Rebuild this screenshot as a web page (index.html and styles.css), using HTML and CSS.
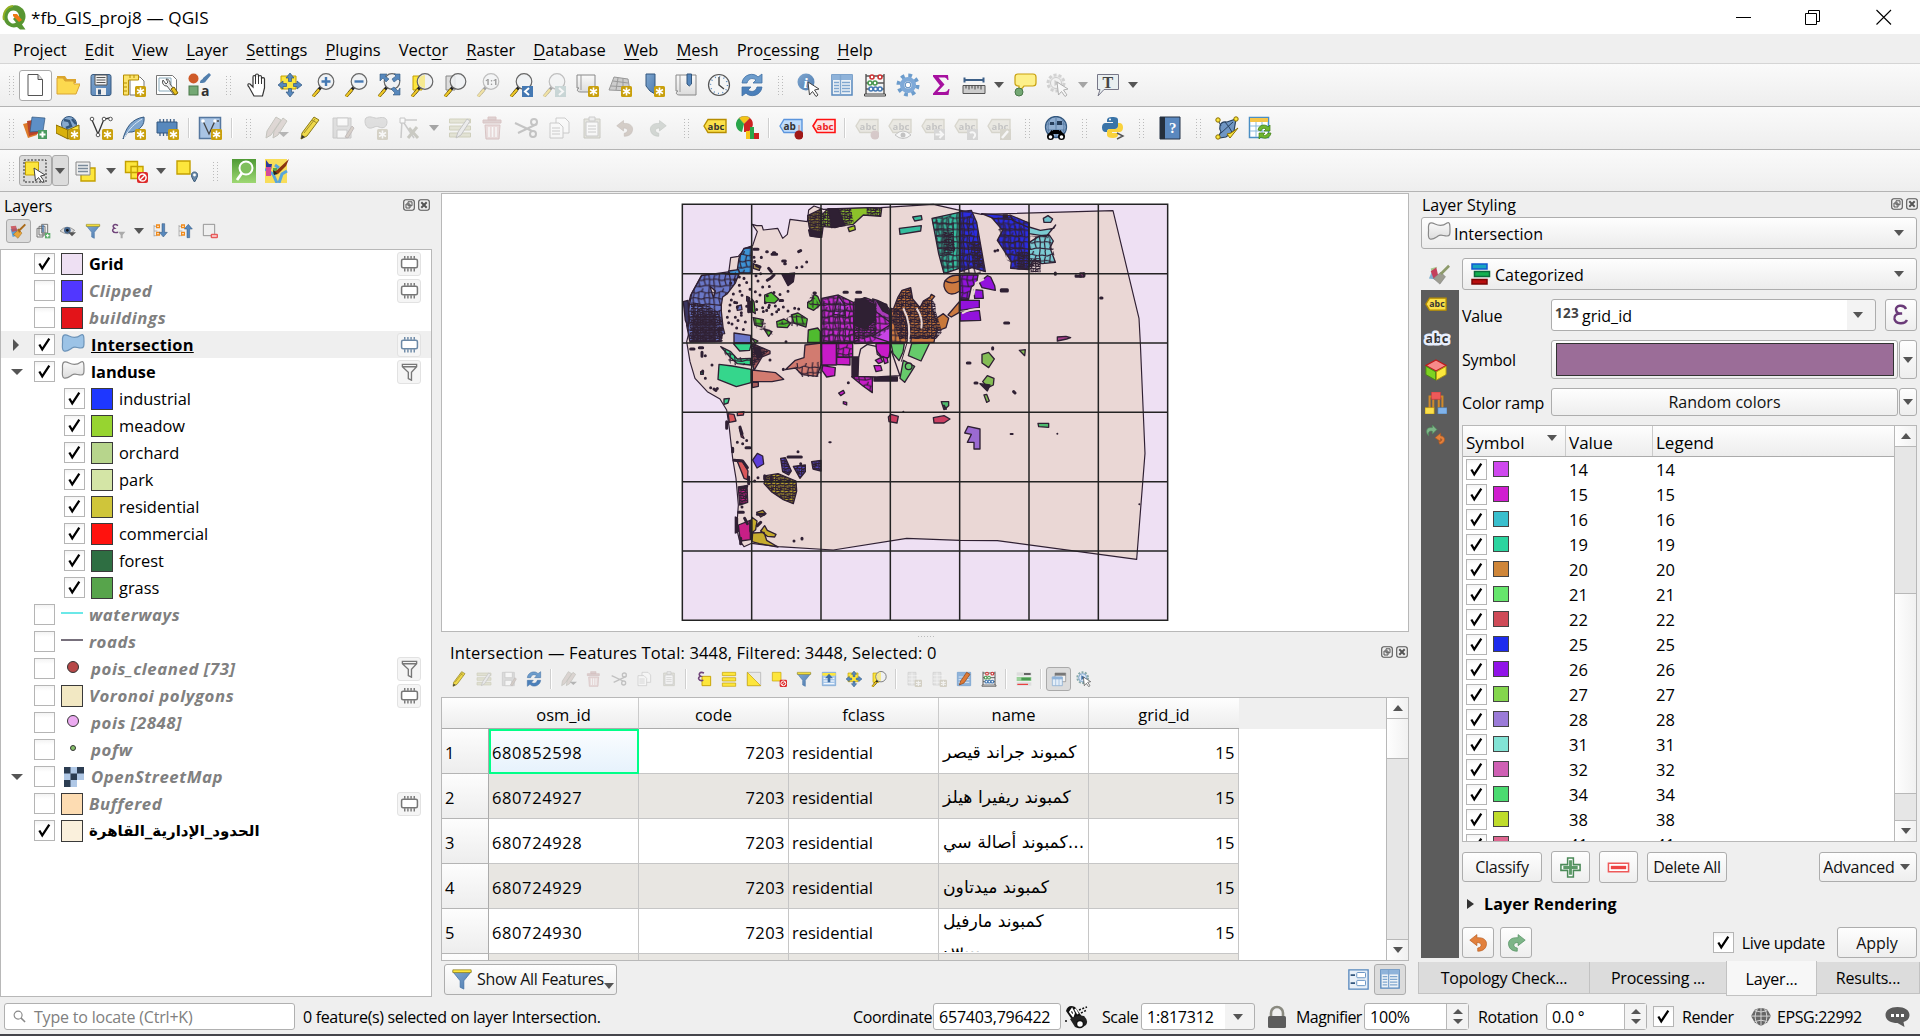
FILE: index.html
```html
<!DOCTYPE html>
<html lang="en">
<head>
<meta charset="utf-8">
<title>*fb_GIS_proj8 — QGIS</title>
<link rel="stylesheet" href="styles.css">
</head>
<body>
<svg class="paints" aria-hidden="true">
<defs>
<linearGradient id="steel" x1="0" y1="0" x2="1" y2="1"><stop offset="0" stop-color="#7fa6cf"/><stop offset="1" stop-color="#4f7db1"/></linearGradient>
<linearGradient id="pale" x1="0" y1="0" x2="0" y2="1"><stop offset="0" stop-color="#fafafa"/><stop offset="1" stop-color="#dcdcdc"/></linearGradient>
<linearGradient id="leaf" x1="0" y1="0" x2="0" y2="1"><stop offset="0" stop-color="#4f9a35"/><stop offset="1" stop-color="#9ed873"/></linearGradient>
<pattern id="dense" width="26" height="24" patternUnits="userSpaceOnUse"><path d="M0 5l9 2 8-4 9 2M0 14l7-1 10 3 9-2M0 21l12 1 14-1M5 0l1 7-2 7 2 10M12 3l-1 11 3 8M19 0l-2 8 3 7-1 9M24 5l-1 9 1 8" fill="none" stroke="#2f2033" stroke-width="3.4"/></pattern>
<pattern id="parcel" width="62" height="56" patternUnits="userSpaceOnUse"><path d="M0 12l16 3 14-6 18 5 14-2M0 30l14-2 18 5 16-5 14 2M0 48l30 3 16-4 16 1M9 0l2 14-4 15 3 27M25 11l-2 21 5 19M37 0l-3 9M44 13l-4 17 5 17M56 0l-2 13 3 16-1 27" fill="none" stroke="#2f2033" stroke-width="3.6"/></pattern>
</defs>
</svg>
<svg class="icons" aria-hidden="true">
<symbol id="star" viewBox="0 0 24 24"><rect x="13" y="13" width="11" height="11" rx="1.500" fill="#c9a00d"/><path d="M18.500 14.500v8M15 16.500l7 4M22 16.500l-7 4" stroke="#fff" stroke-width="1.600"/></symbol>
<symbol id="new" viewBox="0 0 24 24"><path d="M5 1.500h10l4.500 5v16H5z" fill="#fff" stroke="#555"/><path d="M15 1.500v5h4.500" fill="#ddd" stroke="#555"/></symbol>
<symbol id="open" viewBox="0 0 24 24"><path d="M1 3h8l2 3h9v4H1z" fill="#dba52e"/><path d="M1 21V5h6l2 3h9v3h6l-4 10z" fill="#fcd94f" stroke="#d9a432"/></symbol>
<symbol id="save" viewBox="0 0 24 24"><rect x="2" y="1.500" width="20" height="21" rx="2" fill="url(#steel)" stroke="#3a5b80"/><path d="M6 2h12v10H6z" fill="#f3f3f3" stroke="#555"/><path d="M7.500 4.500h9M7.500 7h9M7.500 9.500h9" stroke="#555"/><path d="M7 15h10v7H7z" fill="#eee"/><path d="M9 16.500h3v5H9z" fill="#3a5b80"/></symbol>
<symbol id="layout" viewBox="0 0 24 24"><path d="M8 4h10l4 4v14H8z" fill="#fff" stroke="#777"/><path d="M1.500 2h15v5h-10v15h-5z" fill="#fbe36a" stroke="#b68d00"/><path d="M2 10h3M2 14h3M2 18h3M8 2v3M12 2v3" stroke="#b68d00"/><use href="#star"/></symbol>
<symbol id="layoutmgr" viewBox="0 0 24 24"><path d="M1.500 2.500h16l4 4v15h-20z" fill="#fff" stroke="#777"/><path d="M4 5h12v13H4z" fill="#fff" stroke="#8ab"/><path d="M8 7a4 4 0 0 0 4 6l7 9 3-2-7-9a4 4 0 0 0-4-5l2 3-2 2z" fill="#eee" stroke="#555"/><path d="M16 16l4 6 3-2-4-6z" fill="#e8c11e" stroke="#7a6000"/></symbol>
<symbol id="style" viewBox="0 0 24 24"><circle cx="5.500" cy="5.500" r="5" fill="#cf5a28"/><path d="M12 10c0-4 3-3 3-5l6-5 2 2-5 6c-1 2-3 2-6 2z" fill="#527fad"/><rect x="1" y="13" width="9" height="9" fill="#74a874" stroke="#4a784a"/><text x="13" y="22.500" font-size="14" fill="#333" font-family="Open Sans">a</text></symbol>
<symbol id="hand" viewBox="0 0 24 24"><path d="M9 23L4 14c-2-2-1-4 1-3l3 3V4c0-2 2.500-2 2.500 0V2.500c0-2 3-2 3 0V4c0-2 3-2 3 0v2c0-2 3-1.500 3 0v9l-2 8z" fill="#fff" stroke="#333" stroke-width="1.200"/><path d="M10.500 4v7M13.500 4v7M16.500 5v6" stroke="#333"/></symbol>
<symbol id="arrows" viewBox="0 0 24 24"><path d="M12 0l4 5h-2.500v3.500h-3V5H8zM12 24l4-5h-2.500v-3.500h-3V19H8zM0 12l5-4v2.500h3.500v3H5V16zM24 12l-5-4v2.500h-3.500v3H19V16z" fill="#5788bd" stroke="#33577e" stroke-width=".7"/></symbol>
<symbol id="pansel" viewBox="0 0 24 24"><path d="M3 3h15v13H3z" fill="#fde63c" stroke="#c4a000"/><use href="#arrows"/></symbol>
<symbol id="lens" viewBox="0 0 24 24"><path d="M10 14L5 20" stroke="#222" stroke-width="3"/><path d="M8 16.500l-6 7" stroke="#6a5500" stroke-width="3.200"/><path d="M8 16.500l-6 7" stroke="#f0c929" stroke-width="2"/><circle cx="15" cy="8.500" r="7.800" fill="#eef1f3" fill-opacity=".85" stroke="#666" stroke-width="1.200"/></symbol>
<symbol id="zin" viewBox="0 0 24 24"><use href="#lens"/><path d="M15 4v9M10.500 8.500h9" stroke="#4579b3" stroke-width="2.400"/></symbol>
<symbol id="zout" viewBox="0 0 24 24"><use href="#lens"/><path d="M10.500 8.500h9" stroke="#4579b3" stroke-width="2.400"/></symbol>
<symbol id="zfull" viewBox="0 0 24 24"><use href="#lens"/><path d="M3 1h7L8 3l4 3-3 3-3-4-3 3zM23 1v7l-2-2-4 3-2-3 4-3-2-2zM23 22h-7l2-2-4-4 3-2 4 4 2-3z" fill="#5788bd" stroke="#33577e" stroke-width=".6"/></symbol>
<symbol id="zsel" viewBox="0 0 24 24"><path d="M3 3h9v14H3z" fill="#fde63c" stroke="#c4a000"/><use href="#lens"/><path d="M15 2v13a6.500 6.500 0 0 1 0-13" fill="#f6ea90"/></symbol>
<symbol id="zlay" viewBox="0 0 24 24"><path d="M3 3h9v14H3z" fill="#ddd" stroke="#888"/><use href="#lens"/></symbol>
<symbol id="z11" viewBox="0 0 24 24"><use href="#lens"/><text x="9" y="12" font-size="9" font-weight="700" font-family="Open Sans">1:1</text></symbol>
<symbol id="zlast" viewBox="0 0 24 24"><use href="#lens"/><path d="M13 13h11v11H13z" fill="#4579b3"/><path d="M20 15l-4 3.500 4 3.500" fill="none" stroke="#fff" stroke-width="2"/></symbol>
<symbol id="znext" viewBox="0 0 24 24"><use href="#lens"/><path d="M13 13h11v11H13z" fill="#8aa"/><path d="M17 15l4 3.500-4 3.500" fill="none" stroke="#fff" stroke-width="2"/></symbol>
<symbol id="newmap" viewBox="0 0 24 24"><path d="M2 2h18v17H6c-5 0-4-3-2-4H2z" fill="url(#pale)" stroke="#888"/><path d="M6 2v15" stroke="#999"/><use href="#star"/></symbol>
<symbol id="new3d" viewBox="0 0 24 24"><path d="M6 4l14 2 2 12-21-1z" fill="#ccc" stroke="#999"/><path d="M10 5L8 17M15 5v13M5 8l15 2M3 13l18 1" stroke="#999"/><use href="#star"/></symbol>
<symbol id="bookmark" viewBox="0 0 24 24"><path d="M5 1h9v20l-5-3-4-5z" fill="url(#steel)" stroke="#33577e"/><use href="#star"/></symbol>
<symbol id="showbm" viewBox="0 0 24 24"><path d="M2 2h20v20H6c-5 0-4-3-2-4H2z" fill="url(#pale)" stroke="#888"/><path d="M6 2v17" stroke="#999"/><path d="M13 1h4.500v10l-2.200 2-2.300-2z" fill="#5788bd" stroke="#33577e"/></symbol>
<symbol id="clock" viewBox="0 0 24 24"><circle cx="12" cy="12" r="10.500" fill="#f5f6f6" stroke="#555" stroke-width="1.200"/><circle cx="12" cy="12" r="8.500" fill="none" stroke="#5788bd" stroke-width="1.500" stroke-dasharray="1 3.450"/><path d="M12 4v8l5 4" fill="none" stroke="#444" stroke-width="1.400"/></symbol>
<symbol id="refresh" viewBox="0 0 24 24"><path d="M2 10C3 1 14-1 18 4l4-3v9h-9l3-3c-4-3-8-1-9 3z" fill="#6c9ccc" stroke="#3f6ea3" stroke-width=".8"/><path d="M22 14c-1 9-12 11-16 6l-4 3v-9h9l-3 3c4 3 8 1 9-3z" fill="#4b80bb" stroke="#3f6ea3" stroke-width=".8"/></symbol>
<symbol id="cursor" viewBox="0 0 24 24"><path d="M11 9l11 7-4.500 1 3.500 5-2 1.500-3.500-5-3 3.500z" fill="#fff" stroke="#444"/></symbol>
<symbol id="info" viewBox="0 0 24 24"><circle cx="9" cy="9" r="8.500" fill="url(#steel)"/><text x="6.500" y="14.500" font-size="15" font-style="italic" font-weight="700" fill="#fff" font-family="Liberation Serif">i</text><use href="#cursor"/></symbol>
<symbol id="table" viewBox="0 0 24 24"><path d="M2 2h20v20H2z" fill="#edf2f7" stroke="#5788bd" stroke-width="1.500"/><path d="M2 2h20v5H2z" fill="#8fb3da"/><path d="M4 9.500h5M4 12.500h5M4 15.500h5M4 18.500h5M12 9.500h8M12 12.500h8M12 15.500h8M12 18.500h8M10.500 2v20" stroke="#7fa6cf" stroke-width="1.400"/></symbol>
<symbol id="abacus" viewBox="0 0 24 24"><path d="M3 1v21M21 1v21M3 3h18M3 10h18M3 16h18" stroke="#555" stroke-width="1.400"/><path d="M1.500 21h21v2h-21z" fill="#eee" stroke="#444"/><g fill="#fff" stroke-width="1.600"><g stroke="#c33"><circle cx="9" cy="4" r="2"/><circle cx="17" cy="4" r="2"/></g><g stroke="#4a9a50"><circle cx="7" cy="10" r="2"/><circle cx="12" cy="10" r="2"/></g><g stroke="#4579b3"><circle cx="8" cy="16" r="2"/><circle cx="12.500" cy="16" r="2"/><circle cx="17" cy="16" r="2"/></g></g></symbol>
<symbol id="gear" viewBox="0 0 24 24"><circle cx="12" cy="12" r="9.500" fill="none" stroke="#6c9ccc" stroke-width="4" stroke-dasharray="3.700 3.760"/><circle cx="12" cy="12" r="5.800" fill="none" stroke="#7ea9d8" stroke-width="4.500"/><circle cx="12" cy="12" r="2.800" fill="#fff" stroke="#5788bd"/></symbol>
<symbol id="sigma" viewBox="0 0 24 24"><path d="M4 2h15l.5 5h-1c-1-2-2-2.500-4-2.500H9.500l6 7-7 7.500h7c2 0 3-1 4-3h1l-1 6H4v-1.500l7-8L4 3.500z" fill="#a6109f"/></symbol>
<symbol id="measure" viewBox="0 0 24 24"><path d="M2 7h20M2.500 4.500v5M21.500 4.500v5" stroke="#3c5f87" stroke-width="2"/><path d="M1 12.500h22v8H1z" fill="#ccc" stroke="#555"/><path d="M4 12.500v3M7 12.500v4M10 12.500v3M13 12.500v4M16 12.500v3M19 12.500v4" stroke="#444"/></symbol>
<symbol id="tip" viewBox="0 0 24 24"><path d="M5 1h15q3 0 3 3v6q0 3-3 3h-9l-5 6V13q-4 0-4-3V4q0-3 3-3z" fill="#fdf08a" stroke="#c9a00d" stroke-width="1.200"/><circle cx="6" cy="19" r="4" fill="#74a874" stroke="#4a784a"/></symbol>
<symbol id="action" viewBox="0 0 24 24"><circle cx="10" cy="10" r="8" fill="#ddd" stroke="#999" stroke-width="3" stroke-dasharray="3 2"/><circle cx="10" cy="10" r="5.500" fill="#eee" stroke="#888"/><path d="M8.500 7l5 3-5 3z" fill="#888"/><use href="#cursor"/></symbol>
<symbol id="annot" viewBox="0 0 24 24"><path d="M1.500 1.500h21v15H8l-6 6.500 2-6.500H1.500z" fill="#e9eff1" stroke="#778"/><text x="6.500" y="14.500" font-size="16" font-family="Liberation Serif" font-weight="700" fill="#444">T</text></symbol>
<symbol id="dsm" viewBox="0 0 24 24"><path d="M0 8l12-3 2 14-9 3z" fill="#dd7b2a"/><path d="M4 5l12-2 1 14-11 3z" fill="#b8442a"/><path d="M9 1l13 1-2 13-13 1z" fill="#5d8fc6" stroke="#33577e" stroke-width=".7"/><path d="M15 14h9v9h-9z" fill="#4a9a60"/><path d="M19.500 15.500v6M16.500 18.500h6" stroke="#fff" stroke-width="2"/></symbol>
<symbol id="geopkg" viewBox="0 0 24 24"><circle cx="13" cy="8" r="7.500" fill="#86a9cf" stroke="#33577e"/><path d="M8 4l5 1 2 5-5 2M16 3l4 5" stroke="#33577e" stroke-width="2.500" fill="none"/><path d="M0 9l12 5v9L0 17z" fill="#d9b10c" stroke="#8a6d00"/><path d="M12 14l11-5v9l-11 5z" fill="#fae63f" stroke="#8a6d00"/><use href="#star"/></symbol>
<symbol id="shape" viewBox="0 0 24 24"><path d="M3 4l6 14L15 3l6-1" fill="none" stroke="#333" stroke-width="1.300"/><g fill="#fff" stroke="#555"><circle cx="3" cy="3" r="1.800"/><circle cx="15" cy="3" r="1.800"/><circle cx="21.500" cy="3" r="1.800"/><circle cx="9" cy="19" r="1.800"/></g><use href="#star"/></symbol>
<symbol id="feather" viewBox="0 0 24 24"><path d="M1 23C4 12 9 3 22 1c1 8-4 13-12 15-3 0-5 0-6 3z" fill="#7fa6cf" stroke="#33577e"/><path d="M2 22C8 12 12 8 20 3" stroke="#dce8f5" fill="none"/><use href="#star"/></symbol>
<symbol id="chip" viewBox="0 0 24 24"><path d="M5 3v17M8.500 3v17M12 3v17M15.500 3v17M19 3v17" stroke="#3c5f87" stroke-width="1.300"/><path d="M2 6h20v11H2z" fill="#5788bd" stroke="#33577e"/><use href="#star"/></symbol>
<symbol id="virt" viewBox="0 0 24 24"><path d="M1.500 1.500h21v21h-21z" fill="#a9c4e4" stroke="#55779f" stroke-width="1.500"/><path d="M5 5l6 13 6-13h4" fill="none" stroke="#444" stroke-width="1.300"/><circle cx="5" cy="5" r="1.800" fill="#fff"/><circle cx="17" cy="5" r="1.800" fill="#fff"/><use href="#star"/></symbol>
<symbol id="pencil" viewBox="0 0 24 24"><path d="M3 23l1-6L16 1l5 3L9 20z" fill="#efd94a" stroke="#8a7a1a"/><path d="M14 4l5 3M6 17L17 3" stroke="#a4902a"/><path d="M3 23l1-4 3 2z" fill="#333"/></symbol>
<symbol id="pencils" viewBox="0 0 24 24"><path d="M1 22l1-7L11 1l5 3-10 15zM8 22l1-7L18 2l4 3-9 14z" fill="#b9a7a0" stroke="#776"/><path d="M13 16h11l-5.500 5z" fill="#555"/></symbol>
<symbol id="saveedit" viewBox="0 0 24 24"><path d="M2 2h18v20H2z" fill="#bbb" stroke="#888"/><path d="M6 2h11v8H6zM6 14h10v8H6z" fill="#fff" stroke="#888"/><path d="M14 21L21 10l2 2-6 10z" fill="#a98" stroke="#766"/></symbol>
<symbol id="blob" viewBox="0 0 24 24"><path d="M2 2c5-3 8 1 12 0s9-1 9 4-4 7-8 5-6 2-10 1-5-8-3-10z" fill="#bbb" stroke="#888"/><use href="#star"/></symbol>
<symbol id="vertex" viewBox="0 0 24 24"><path d="M4 22L5 4h15M5 4l12 18" fill="none" stroke="#888" stroke-width="1.500"/><path d="M3 2h5v5H3z" fill="#fff" stroke="#777"/><path d="M11 22l9-11M12 12l9 10" stroke="#887" stroke-width="3"/></symbol>
<symbol id="multi" viewBox="0 0 24 24"><path d="M1.500 3h21v4h-21zM1.500 10h21v4h-21zM1.500 17h21v4h-21z" fill="#c9c9a5" stroke="#996"/><path d="M8 22l2-6 9-13 3 2-9 14z" fill="#ddd" stroke="#777"/></symbol>
<symbol id="trash" viewBox="0 0 24 24"><path d="M2 4h18v3H2zM7 1h8v3H7z" fill="#b99" stroke="#a77"/><path d="M4 9h15l-1 14H5z" fill="#d9b5b5" stroke="#a77"/><path d="M8 11v10M11.500 11v10M15 11v10" stroke="#fff" stroke-width="1.500"/></symbol>
<symbol id="cut" viewBox="0 0 24 24"><path d="M1 7l17 8M4 17L23 8" stroke="#777" stroke-width="2"/><circle cx="20" cy="6" r="3" fill="none" stroke="#777" stroke-width="2"/><circle cx="19" cy="18" r="3" fill="none" stroke="#777" stroke-width="2"/></symbol>
<symbol id="copy" viewBox="0 0 24 24"><path d="M9 2h9l4 4v11H9z" fill="#fff" stroke="#888"/><path d="M3 7h9l4 4v11H3z" fill="#fff" stroke="#888"/><path d="M5 12h8M5 15h8M5 18h8" stroke="#888"/></symbol>
<symbol id="paste" viewBox="0 0 24 24"><path d="M4 3h16v19H4z" fill="#ccb" stroke="#887"/><path d="M6 6h12v14H6z" fill="#fff" stroke="#888"/><path d="M9 1h6v4H9zM8 10h8M8 13h8M8 16h8" fill="#ddd" stroke="#888"/></symbol>
<symbol id="undo" viewBox="0 0 24 24"><path d="M1 9l9-7v4c9-1 13 4 12 9-1 6-6 8-11 8v-4c6-1 6-7-1-7v4z" fill="#e2803c" stroke="#b4581c" stroke-width=".8"/></symbol>
<symbol id="redo" viewBox="0 0 24 24"><path d="M23 9l-9-7v4C5 5 1 10 2 15c1 6 6 8 11 8v-4c-6-1-6-7 1-7v4z" fill="#7db588" stroke="#4b8a58" stroke-width=".8"/></symbol>
<symbol id="tag" viewBox="0 0 24 24"><path d="M1 10l4-6.500h18v13H5z" fill="#fbe04a" stroke="#b68d00" stroke-width="1.400"/><text x="4.500" y="13.500" font-size="9.500" font-weight="700" fill="#333" font-family="Open Sans" textLength="17">abc</text></symbol>
<symbol id="diag" viewBox="0 0 24 24"><path d="M8 8L3 2q6-4 11 0z" fill="#f5c518" stroke="#874" stroke-width=".5"/><path d="M8 8L3 2a8 8 0 0 0 3 14z" fill="#2aa54a"/><path d="M8 8l6-6a8 8 0 0 1-6 14z" fill="#c22"/><path d="M10 15h4v8h-4z" fill="#f5c518"/><path d="M14 11h4v12h-4z" fill="#2aa54a"/><path d="M18 17h5v6h-5z" fill="#c22"/></symbol>
<symbol id="tagpin" viewBox="0 0 24 24"><path d="M1 10l4-6.500h18v13H5z" fill="#bfdcfb" stroke="#5b95dd" stroke-width="1.400"/><text x="4.500" y="13.500" font-size="10" font-weight="700" fill="#333" font-family="Open Sans">ab</text><path d="M20 9v8" stroke="#caa" stroke-width="2"/><circle cx="20" cy="19" r="4.500" fill="#a01818"/></symbol>
<symbol id="tagred" viewBox="0 0 24 24"><path d="M1 10l4-6.500h18v13H5z" fill="#fbe4e4" stroke="#f11" stroke-width="1.600"/><text x="4.500" y="13.500" font-size="9.500" font-weight="700" fill="#e22" font-family="Open Sans" textLength="17">abc</text></symbol>
<symbol id="tagoff" viewBox="0 0 24 24"><path d="M1 10l4-6.500h18v13H5z" fill="#d8d4c4" stroke="#a9a58e" stroke-width="1.400"/><text x="4.500" y="13.500" font-size="9.500" font-weight="700" fill="#777" font-family="Open Sans" textLength="17">abc</text></symbol>
<symbol id="t1" viewBox="0 0 24 24"><use href="#tagoff"/><circle cx="20" cy="19" r="4.500" fill="#a88"/></symbol>
<symbol id="t2" viewBox="0 0 24 24"><use href="#tagoff"/><path d="M7 19q8-8 16 0-8 7-16 0z" fill="#fff" stroke="#777"/><circle cx="15" cy="19" r="2.500" fill="#777"/></symbol>
<symbol id="t3" viewBox="0 0 24 24"><use href="#tagoff"/><path d="M13 13h11v11H13z" fill="#aaa"/><path d="M14.500 18.500h7M18.500 15l3.500 3.500-3.500 3.500" fill="none" stroke="#fff" stroke-width="2"/></symbol>
<symbol id="t4" viewBox="0 0 24 24"><use href="#tagoff"/><path d="M13 13h11v11H13z" fill="#aaa"/><path d="M16 17a3 3 0 1 1 3 5" fill="none" stroke="#fff" stroke-width="2"/></symbol>
<symbol id="t5" viewBox="0 0 24 24"><use href="#tagoff"/><path d="M13 13h11v11H13z" fill="#a9a58e"/><path d="M15 22l6-7" stroke="#fff" stroke-width="2.500"/></symbol>
<symbol id="meta" viewBox="0 0 24 24"><circle cx="12" cy="11" r="10.500" fill="#8fadd0" stroke="#33577e" stroke-width="1.300"/><path d="M2 8h20M2 14h20M12 1v20M6 3q-4 8 0 16M18 3q4 8 0 16" stroke="#5d80a8" fill="none"/><path d="M6 6h4v3H6zM13 5h5v4h-5z" fill="#263d5a"/><path d="M9 15l-4 5M15 15l4 5" stroke="#000" stroke-width="3.500"/><circle cx="6.500" cy="20.500" r="3.500"/><circle cx="17.500" cy="20.500" r="3.500"/><path d="M9 14h6v4H9z"/><circle cx="6.500" cy="21" r="1.800" fill="#fff"/><circle cx="17.500" cy="21" r="1.800" fill="#fff"/></symbol>
<symbol id="python" viewBox="0 0 24 24"><path d="M11 1c5 0 6 1 6 3v6c0 2-1 3-3 3H9c-2 0-3 1-3 3H4c-4 0-4-9 0-9h8V6H6V4c0-2 2-3 5-3z" fill="#3a74a8"/><path d="M12 22c-4 0-6-1-6-3v-3c0-2 1-3 3-3h5c2 0 3-1 3-3V7h2c4 0 4 9 0 9h-8v1h6v2c0 2-2 3-5 3z" fill="#f9d23c"/><circle cx="9" cy="3.500" r="1" fill="#fff"/><path d="M16 17l6 3-6 3" fill="none" stroke="#555" stroke-width="1.400"/></symbol>
<symbol id="help" viewBox="0 0 24 24"><path d="M2 1h20v22H2z" fill="#5a88bf" stroke="#263548"/><path d="M2 1h5v22H2z" fill="#25303e"/><text x="11" y="17" font-size="15" fill="#fff" font-family="Liberation Serif">?</text></symbol>
<symbol id="topo" viewBox="0 0 24 24"><path d="M5 10q1-5 7-4l9-3-2 12-8 6-7 1q0-4 2-6-2-3-1-6z" fill="#6f96c4" stroke="#28415f" stroke-width="1.200"/><path d="M3 4l3 6M6 17l12-11M10 6l4 5 4 7" stroke="#28415f" fill="none"/><g fill="#fae63f" stroke="#8a6d00"><circle cx="3" cy="4" r="2.200"/><circle cx="21" cy="3" r="2.200"/><circle cx="3" cy="21" r="2.200"/><path d="M12 18l3 4 8-10-7 5z"/></g></symbol>
<symbol id="tabref" viewBox="0 0 24 24"><path d="M1.500 1.500h19v20h-19z" fill="#fff" stroke="#4a8ec4" stroke-width="1.500"/><path d="M2 2h18v4H2z" fill="#f6c54a"/><path d="M2 10h18M2 15h18M8 6v15M14 6v15" stroke="#8ab9dd"/><path d="M10 14c1-6 8-6 10-3l2-2v6h-6l2-2c-2-1-4-1-5 2zM23 17c-1 6-8 6-10 4l-2 2v-6h6l-2 2c2 1 4 0 5-2z" fill="#6eb52f" stroke="#3e7e12" stroke-width=".7"/></symbol>
<symbol id="select" viewBox="0 0 24 24"><path d="M1 1h22v22H1z" fill="none" stroke="#222" stroke-dasharray="2 1.500"/><path d="M2.500 3h13v13h-13z" fill="#fde63c" stroke="#c4a000"/><use href="#cursor"/></symbol>
<symbol id="sellist" viewBox="0 0 24 24"><path d="M7 9h14v13H7z" fill="#fde63c" stroke="#c4a000" stroke-width="1.400"/><path d="M2 3h14v13H2z" fill="#eee" stroke="#888"/><path d="M4 6.500h10M4 9.500h10M4 12.500h10" stroke="#7a8a9a" stroke-width="1.600"/></symbol>
<symbol id="no" viewBox="0 0 24 24"><rect x="13" y="13" width="11" height="11" rx="2" fill="#dd2a2a"/><circle cx="18.500" cy="18.500" r="3.600" fill="none" stroke="#fff" stroke-width="1.500"/><path d="M16 21l5-5" stroke="#fff" stroke-width="1.400"/></symbol>
<symbol id="desel" viewBox="0 0 24 24"><path d="M1.500 2.500h12v11h-12zM7 7.500h12v12H7z" fill="#fde63c" stroke="#c4a000" stroke-width="1.400"/><use href="#no"/></symbol>
<symbol id="selloc" viewBox="0 0 24 24"><path d="M2 2h13v13H2z" fill="#fde63c" stroke="#c4a000" stroke-width="1.400"/><path d="M19.500 23c-5-7-3-10 0-10s5 3 0 10z" fill="#6a89a8" stroke="#3a5a78"/><circle cx="19.500" cy="16" r="1.400" fill="#fff"/></symbol>
<symbol id="gsearch" viewBox="0 0 24 24"><path d="M0 0h24v24H0z" fill="url(#leaf)"/><circle cx="14" cy="9" r="6.500" fill="#7fbf5c" stroke="#fff" stroke-width="2"/><path d="M10 14l-5 7" stroke="#fff" stroke-width="2.800"/></symbol>
<symbol id="osm" viewBox="0 0 24 24"><path d="M0 0h22v24H0z" fill="#f8dd5a"/><path d="M0 10l8 5 4 9M14 24l3-9 5-3M10 6l4 3" stroke="#58a5dc" stroke-width="3" fill="none"/><path d="M1 1l3 4h3l-1 6H1z" fill="#2b3a9c"/><path d="M1 8h5v9H1z" fill="#d54a9a"/><path d="M8 9h4v6H8z" fill="#5aa84a"/><path d="M24 0l-3 7-8 8-5-3 3 0z" fill="#8a3410"/><path d="M8 11l5 4-4 1z" fill="#222"/></symbol>
<symbol id="funnel" viewBox="0 0 24 24"><path d="M2 4h20l-8 10v9l-4-2v-7z" fill="url(#steel)" stroke="#3f6ea3" stroke-width=".8"/><path d="M2 2h20v3H2z" fill="#fde63c" stroke="#8a7a1a" stroke-width=".8"/></symbol>
<symbol id="gfunnel" viewBox="0 0 24 24"><path d="M3 3h18v3l-6.500 7v10l-4-2v-8L3 6zM3 6h18" fill="#f4f4f4" stroke="#777" stroke-width="1.700"/></symbol>
<symbol id="mem" viewBox="0 0 24 24"><path d="M6 2.500v3.500M10 2.500v3.500M14 2.500v3.500M18 2.500v3.500M6 18v4M10 18v4M14 18v4M18 18v4" stroke="currentColor" stroke-width="1.800"/><rect x="2" y="6.500" width="20" height="11" rx="2" fill="#fff" stroke="currentColor" stroke-width="1.900"/></symbol>
<symbol id="poly" viewBox="0 0 24 24"><path d="M1.500 8C1 1 4 1 8 3s8 2 12-1c3-2 3 3 3 7s0 6-3 6c-4 0-6-2-9 0s-5 4-8 3-1-8-1.500-10z"/></symbol>
<symbol id="brush" viewBox="0 0 24 24"><path d="M1 9l9-1 3 10-9 3z" fill="#58a0d8"/><path d="M1 5l8-1 2 8-8 1z" fill="#c8424a" opacity=".8"/><path d="M5 17l8-7 5 5-6 8z" fill="#e7a43a" stroke="#8a5a10" stroke-width=".6"/><path d="M12 9l3 5M13 12L23 2" stroke="#a96a1a" stroke-width="3"/></symbol>
<symbol id="greybrush" viewBox="0 0 24 24"><path d="M3 6l7-2-5 10z" fill="#a9c78c"/><path d="M4 10l5 8-8-1z" fill="#7fb0d0"/><path d="M3 9l6-4 2 8-5 4z" fill="#c4405c"/><path d="M6 17l8-7 5 5-6 8z" fill="#9c9c90" stroke="#777" stroke-width=".6"/><path d="M14 12L23 3" stroke="#8d9a6a" stroke-width="3"/></symbol>
<symbol id="halo" viewBox="0 0 28 18"><text x="2.500" y="13.500" font-size="13" font-weight="700" fill="#333" stroke="#e8eefc" stroke-width="5" stroke-linejoin="round" paint-order="stroke" font-family="Open Sans" textLength="23">abc</text></symbol>
<symbol id="group" viewBox="0 0 24 24"><path d="M6 5h9v13H6zM3 8h9v13H3zM10 2h9v13h-9z" fill="none" stroke="#666" stroke-width="1.300"/><path d="M12 3v11" stroke="#4579b3" stroke-width="2"/><path d="M15 15h8v8h-8z" fill="#5fae6c"/><path d="M19 16.500v5M16.500 19h5" stroke="#fff" stroke-width="1.500"/></symbol>
<symbol id="eye" viewBox="0 0 24 24"><path d="M0 12Q10 1 22 11q-9 10-22 1z" fill="#ddd" stroke="#777"/><circle cx="11" cy="11" r="5" fill="#47688f"/><circle cx="11" cy="11" r="2" fill="#111"/><path d="M12 14h12l-6 6z" fill="#555"/></symbol>
<symbol id="eps" viewBox="0 0 24 24"><path d="M17 6C15 1 6 2 7 7c.5 3 3 4 6 3.500C7 10 5 13 5.500 16c1 5 10 6 12.500 1" fill="none" stroke="#6a3a78" stroke-width="2.400"/></symbol>
<symbol id="epsf" viewBox="0 0 24 24"><path d="M12 4C6 0 2 5 7 8c-5 1-4 8 5 6" fill="none" stroke="#70447a" stroke-width="2.200"/><path d="M12 13h11l-4 5v5h-3v-5z" fill="#aaa"/></symbol>
<symbol id="expand" viewBox="0 0 24 24"><path d="M3 3v17M3 5h5M3 12h5M3 19h5" stroke="#999"/><path d="M7 3h4v4H7zM7 14h4v4H7z" fill="#fff" stroke="#f18a1a" stroke-width="2"/><path d="M15 1h4v13h4l-6 7-6-7h4z" fill="#5788bd" stroke="#33577e" stroke-width=".8"/></symbol>
<symbol id="collapse" viewBox="0 0 24 24"><path d="M3 3v17M3 5h5M3 12h5M3 19h5" stroke="#999"/><path d="M7 3h4v4H7zM7 14h4v4H7z" fill="#fff" stroke="#f18a1a" stroke-width="2"/><path d="M15 22h4V9h4l-6-7-6 7h4z" fill="#5788bd" stroke="#33577e" stroke-width=".8"/></symbol>
<symbol id="remove" viewBox="0 0 24 24"><path d="M2 2h17v17H2z" fill="none" stroke="#888" stroke-width="1.300"/><rect x="13" y="16" width="11" height="7" rx="2" fill="#e85a5a"/><path d="M15 19.500h7" stroke="#fff" stroke-width="1.800"/></symbol>
<symbol id="esel" viewBox="0 0 24 24"><path d="M9 8h13v14H9z" fill="#fde63c" stroke="#c4a000" stroke-width="1.400"/><path d="M12 3C5 0 3 6 7 8c-5 1-4 8 4 6" fill="none" stroke="#70447a" stroke-width="2.400"/></symbol>
<symbol id="selall" viewBox="0 0 24 24"><path d="M2 2h20v5H2zM2 10h20v5H2zM2 18h20v5H2z" fill="#fde63c" stroke="#c4a000"/></symbol>
<symbol id="invert" viewBox="0 0 24 24"><path d="M2 2h20v20H2z" fill="#e9e9e9" stroke="#aaa"/><path d="M2 2v20h20z" fill="#fde63c" stroke="#c4a000"/></symbol>
<symbol id="unsel" viewBox="0 0 24 24"><path d="M2 2h13v13H2z" fill="#fde63c" stroke="#c4a000"/><use href="#no"/></symbol>
<symbol id="totop" viewBox="0 0 24 24"><path d="M2 2h20v20H2z" fill="#a9c8ea" stroke="#6c9ccc"/><path d="M2 3h20v4H2z" fill="#fde63c"/><path d="M4 11h16M4 15h16M4 19h16" stroke="#fff" stroke-width="1.500"/><path d="M12 4l6 7h-4v6h-4v-6H6z" fill="#3f6ea3"/></symbol>
<symbol id="fields" viewBox="0 0 24 24"><path d="M3 2h12v19H3z" fill="#ccc" stroke="#999"/><path d="M3 7h17M3 12h17M3 17h17M9 2v19" stroke="#fff"/><use href="#star"/></symbol>
<symbol id="calc" viewBox="0 0 24 24"><path d="M2 2h20v20H2z" fill="#8fb3da" stroke="#6c9ccc"/><path d="M4 9h16M4 13h16M4 17h16" stroke="#fff"/><path d="M5 21l2-6L16 2l5 3-9 13z" fill="#de7a36" stroke="#8a4010"/></symbol>
<symbol id="cond" viewBox="0 0 24 24"><path d="M1 2h22v5H1z" fill="#ddd"/><path d="M12 3h10v3H12z" fill="#666"/><path d="M1 9h22v6H1z" fill="#9ad19a"/><path d="M8 10h14v4H8z" fill="#4a9a50"/><path d="M1 17h22v5H1z" fill="#ddd"/><path d="M2 20h16" stroke="#e22" stroke-width="1.500"/></symbol>
<symbol id="dock" viewBox="0 0 24 24"><path d="M6 3h16v13H6z" fill="#f2f2f2" stroke="#888"/><path d="M6 3h16v4H6z" fill="#777"/><path d="M2 9h15v13H2z" fill="#e4eef8" stroke="#7fa6cf"/><path d="M2 9h15v3H2zM7 12v10M12 12v10" fill="#8fb3da" stroke="#8fb3da"/></symbol>
<symbol id="act2" viewBox="0 0 24 24"><circle cx="10" cy="10" r="8" fill="#eee" stroke="#8aa" stroke-width="3" stroke-dasharray="3 2"/><circle cx="10" cy="10" r="6" fill="#dbe8f5" stroke="#5788bd"/><path d="M8 6.500l6 3.500-6 3.500z" fill="#3f6ea3"/><use href="#cursor"/></symbol>
<symbol id="form" viewBox="0 0 24 24"><path d="M1 1h22v22H1z" fill="#e8f0f8" stroke="#5788bd" stroke-width="1.500"/><path d="M3 7h5M3 16h5" stroke="#33577e" stroke-width="2"/><rect x="10" y="4" width="10" height="6" rx="1" fill="#fff" stroke="#5788bd"/><rect x="10" y="13" width="10" height="6" rx="1" fill="#fff" stroke="#5788bd"/></symbol>
<symbol id="check" viewBox="0 0 21 21"><path d="M4.800 10.500l3.200 5.300L15.800 4" fill="none" stroke="#000" stroke-width="2.500"/></symbol>
<symbol id="float" viewBox="0 0 12 12"><rect x=".7" y=".7" width="10.600" height="10.600" rx="2.200" fill="none" stroke="#555" stroke-width="1.100"/><path d="M5 2.800h4v4H5zM3 5h4v4H3z" fill="none" stroke="#555"/></symbol>
<symbol id="close" viewBox="0 0 12 12"><rect x=".7" y=".7" width="10.600" height="10.600" rx="2.200" fill="none" stroke="#555" stroke-width="1.100"/><path d="M3.300 3.300l5.400 5.400M8.700 3.300L3.300 8.700" stroke="#555" stroke-width="2"/></symbol>
<symbol id="cube" viewBox="0 0 24 24"><path d="M12 1l11 6-11 6L1 7z" fill="#f78a8a" stroke="#c11a1a" stroke-width="1.300"/><path d="M1 8l10.500 6v9L1 17z" fill="#7ed321" stroke="#4a8a10"/><path d="M23 8l-10.500 6v9L23 17z" fill="#fbe83c" stroke="#b09a10"/></symbol>
<symbol id="tree" viewBox="0 0 24 24"><path d="M9 8v10M5 18V5h4M19 18V5h-4M15 8v10" stroke="#d08a2a" stroke-width="2.200" fill="none"/><path d="M7 0h10v8H7z" fill="#ee5a5a" stroke="#c33" stroke-width=".6"/><path d="M0 17h10v7H0z" fill="#fbe04a" stroke="#b68d00" stroke-width=".6"/><path d="M14 17h10v7H14z" fill="#7fb2ea" stroke="#3f6ea3" stroke-width=".6"/></symbol>
<symbol id="hist" viewBox="0 0 24 24"><path d="M13 6L8 1v3C1 3 0 9 4 13c-1-4 1-6 4-5v3z" fill="#7db588" stroke="#4b8a58" stroke-width=".7"/><path d="M11 15l6-5v3c6 0 6 8-1 9l-1-3c4 0 4-3 2-3v3z" fill="#e2803c" stroke="#b4581c" stroke-width=".7"/></symbol>
</svg>

<div class="app">
<header class="titlebar">
<svg class="logo" viewBox="0 0 24 26"><path d="M11 1.500a10.500 11 0 1 0 4 21.500l3 2.500h5.500l-3.500-5A10.500 11 0 0 0 11 1.500zm.5 5a5.500 6.500 0 0 1 5 9.500l-3-3.500-2.500 2.500 3 3.500a5.500 6.500 0 1 1-2.500-12z" fill="#589632"/><path d="M11 2a10.500 11 0 0 0-9 14" fill="none" stroke="#93b023" stroke-width="2"/><path d="M11 10h4l5 6-3 2-6-6z" fill="#ee7913"/></svg>
<h1>*fb_GIS_proj8 — QGIS</h1>
<svg class="winctl" viewBox="0 0 156 16"><path d="M0 8.500h15M69.500 4.500h11v11h-11zM72.500 4.500v-3h11v11h-3" fill="none" stroke="#000"/><path d="M140.500 1l14.500 14.500M155 1L140.500 15.500" stroke="#000" stroke-width="1.100"/></svg>
</header>
<nav class="menu"><span>Pro<u>j</u>ect</span><span><u>E</u>dit</span><span><u>V</u>iew</span><span><u>L</u>ayer</span><span><u>S</u>ettings</span><span><u>P</u>lugins</span><span>Vect<u>o</u>r</span><span><u>R</u>aster</span><span><u>D</u>atabase</span><span><u>W</u>eb</span><span><u>M</u>esh</span><span>Pro<u>c</u>essing</span><span><u>H</u>elp</span></nav>

<div class="bar">
<i class="grip first"></i>
<b class="raised"><svg><use href="#new"/></svg></b><b><svg><use href="#open"/></svg></b><b><svg><use href="#save"/></svg></b><b><svg><use href="#layout"/></svg></b><b><svg><use href="#layoutmgr"/></svg></b><b><svg><use href="#style"/></svg></b>
<i class="grip"></i>
<b><svg><use href="#hand"/></svg></b><b><svg><use href="#pansel"/></svg></b><b><svg><use href="#zin"/></svg></b><b><svg><use href="#zout"/></svg></b><b><svg><use href="#zfull"/></svg></b><b><svg><use href="#zsel"/></svg></b><b><svg><use href="#zlay"/></svg></b><b class="off"><svg><use href="#z11"/></svg></b><b><svg><use href="#zlast"/></svg></b><b class="off"><svg><use href="#znext"/></svg></b><b><svg><use href="#newmap"/></svg></b><b><svg><use href="#new3d"/></svg></b><b><svg><use href="#bookmark"/></svg></b><b><svg><use href="#showbm"/></svg></b><b><svg><use href="#clock"/></svg></b><b><svg><use href="#refresh"/></svg></b>
<i class="grip"></i>
<b><svg><use href="#info"/></svg></b><b><svg><use href="#table"/></svg></b><b><svg><use href="#abacus"/></svg></b><b><svg><use href="#gear"/></svg></b><b><svg><use href="#sigma"/></svg></b><b><svg><use href="#measure"/></svg></b><i class="arr"></i><b><svg><use href="#tip"/></svg></b><b class="off"><svg><use href="#action"/></svg></b><i class="arr off2"></i><b><svg><use href="#annot"/></svg></b><i class="arr"></i>
</div>
<div class="bar">
<i class="grip first"></i>
<b><svg><use href="#dsm"/></svg></b><b><svg><use href="#geopkg"/></svg></b><b><svg><use href="#shape"/></svg></b><b><svg><use href="#feather"/></svg></b><b><svg><use href="#chip"/></svg></b><i class="sep"></i><b><svg><use href="#virt"/></svg></b><i class="sep"></i>
<i class="grip"></i>
<b class="off"><svg><use href="#pencils"/></svg></b><b><svg><use href="#pencil"/></svg></b><b class="off"><svg><use href="#saveedit"/></svg></b><b class="off mono"><svg><use href="#blob"/></svg></b><b class="off"><svg><use href="#vertex"/></svg></b><i class="arr off2"></i><b class="off"><svg><use href="#multi"/></svg></b><b class="off"><svg><use href="#trash"/></svg></b><b class="off"><svg><use href="#cut"/></svg></b><b class="off"><svg><use href="#copy"/></svg></b><b class="off"><svg><use href="#paste"/></svg></b><b class="off mono small"><svg><use href="#undo"/></svg></b><b class="off mono small"><svg><use href="#redo"/></svg></b>
<i class="grip"></i>
<b><svg><use href="#tag"/></svg></b><b><svg><use href="#diag"/></svg></b><i class="sep"></i><b><svg><use href="#tagpin"/></svg></b><b><svg><use href="#tagred"/></svg></b><i class="sep"></i><b class="off"><svg><use href="#t1"/></svg></b><b class="off"><svg><use href="#t2"/></svg></b><b class="off"><svg><use href="#t3"/></svg></b><b class="off"><svg><use href="#t4"/></svg></b><b class="off"><svg><use href="#t5"/></svg></b>
<i class="grip"></i><b><svg><use href="#meta"/></svg></b><i class="grip"></i><b><svg><use href="#python"/></svg></b><i class="grip"></i><b><svg><use href="#help"/></svg></b><i class="grip"></i><b><svg><use href="#topo"/></svg></b><b><svg><use href="#tabref"/></svg></b>
</div>
<div class="bar third">
<i class="grip first"></i>
<b class="pressed"><svg><use href="#select"/></svg></b><i class="arr pressed"></i><b><svg><use href="#sellist"/></svg></b><i class="arr"></i><b><svg><use href="#desel"/></svg></b><i class="arr"></i><b><svg><use href="#selloc"/></svg></b>
<i class="grip"></i><b><svg><use href="#gsearch"/></svg></b><b><svg><use href="#osm"/></svg></b>
</div>

<main class="work">
<section class="layers">
<div class="dockhead"><h2>Layers</h2><svg><use href="#float"/></svg><svg><use href="#close"/></svg></div>
<div class="minibar tree-tools"><b class="pressed"><svg><use href="#brush"/></svg></b><b><svg><use href="#group"/></svg></b><b><svg><use href="#eye"/></svg></b><b><svg><use href="#funnel"/></svg></b><b><svg><use href="#epsf"/></svg></b><i class="arr"></i><b><svg><use href="#expand"/></svg></b><b><svg><use href="#collapse"/></svg></b><b><svg><use href="#remove"/></svg></b></div>
<ul class="tree">
<li><i class="tw"></i><i class="cb"><svg><use href="#check"/></svg></i><i class="sw" style="background:#eee0f3"></i><span class="on">Grid</span><em><svg><use href="#mem"/></svg></em></li>
<li><i class="tw"></i><i class="cb"></i><i class="sw" style="background:#5137ff"></i><span class="hid">Clipped</span><em><svg><use href="#mem"/></svg></em></li>
<li><i class="tw"></i><i class="cb"></i><i class="sw" style="background:#e31419"></i><span class="hid">buildings</span></li>
<li class="cur"><i class="tw closed"></i><i class="cb"><svg><use href="#check"/></svg></i><svg class="pl blue"><use href="#poly"/></svg><span class="on wide"><u>Intersection</u></span><em class="bl"><svg><use href="#mem"/></svg></em></li>
<li><i class="tw opened"></i><i class="cb"><svg><use href="#check"/></svg></i><svg class="pl"><use href="#poly"/></svg><span class="on">landuse</span><em><svg><use href="#gfunnel"/></svg></em></li>
<li class="kid"><i class="cb"><svg><use href="#check"/></svg></i><i class="sw" style="background:#1e37ff"></i><span>industrial</span></li>
<li class="kid"><i class="cb"><svg><use href="#check"/></svg></i><i class="sw" style="background:#97d430"></i><span>meadow</span></li>
<li class="kid"><i class="cb"><svg><use href="#check"/></svg></i><i class="sw" style="background:#b7d58c"></i><span>orchard</span></li>
<li class="kid"><i class="cb"><svg><use href="#check"/></svg></i><i class="sw" style="background:#d4e5a6"></i><span>park</span></li>
<li class="kid"><i class="cb"><svg><use href="#check"/></svg></i><i class="sw" style="background:#cfc53a"></i><span>residential</span></li>
<li class="kid"><i class="cb"><svg><use href="#check"/></svg></i><i class="sw" style="background:#ff120e"></i><span>commercial</span></li>
<li class="kid"><i class="cb"><svg><use href="#check"/></svg></i><i class="sw" style="background:#2e6e42"></i><span>forest</span></li>
<li class="kid"><i class="cb"><svg><use href="#check"/></svg></i><i class="sw" style="background:#57a44b"></i><span>grass</span></li>
<li><i class="tw"></i><i class="cb"></i><i class="ln" style="background:#6be8e8"></i><span class="hid">waterways</span></li>
<li><i class="tw"></i><i class="cb"></i><i class="ln" style="background:#77707c"></i><span class="hid">roads</span></li>
<li><i class="tw"></i><i class="cb"></i><i class="dot" style="background:#b74848"></i><span class="hid">pois_cleaned [73]</span><em><svg><use href="#gfunnel"/></svg></em></li>
<li><i class="tw"></i><i class="cb"></i><i class="sw" style="background:#f2e8c3"></i><span class="hid">Voronoi polygons</span><em><svg><use href="#mem"/></svg></em></li>
<li><i class="tw"></i><i class="cb"></i><i class="dot" style="background:#ebaaf0"></i><span class="hid">pois [2848]</span></li>
<li><i class="tw"></i><i class="cb"></i><i class="dot tiny" style="background:#86c06a"></i><span class="hid">pofw</span></li>
<li><i class="tw opened"></i><i class="cb"></i><svg class="osmico" viewBox="0 0 20 20"><path d="M0 0h20v13h-7v7H0z" fill="#b0c8e6"/><path d="M0 0h6.500v6.500H0zM13 0h7v6.500h-7zM6.500 6.500H13V13H6.500zM0 13h6.500v7H0z" fill="#2c3d52"/></svg><span class="hid">OpenStreetMap</span></li>
<li><i class="tw"></i><i class="cb"></i><i class="sw" style="background:#fddcb2"></i><span class="hid">Buffered</span><em><svg><use href="#mem"/></svg></em></li>
<li><i class="tw"></i><i class="cb"><svg><use href="#check"/></svg></i><i class="sw" style="background:#faf0dc"></i><span class="on ar">الحدود_الإدارية_القاهرة</span></li>
</ul>
</section>

<section class="center">
<div class="canvas">
<svg viewBox="442 194 966 437" width="966" height="437">
<g transform="translate(670 195) scale(.33333)" stroke="#2f2033" stroke-width="4" stroke-linejoin="round">
<path d="M37 28H1493V1276H37z" fill="#eee0f3" stroke="none"/>
<path d="M247 88L260 92 276 92 280 105 323 100 338 130 352 118 360 73 412 80 416 45 432 33 460 43 632 38 790 28 860 44 935 58 1329 47 1407 370 1411 444 1425 775 1400 1093 982 1037 870 1036 710 1030 490 1065 325 1055 245 1045 222 1055 208 1035 200 1000 205 930 198 850 188 790 178 700 170 645 150 612 112 590 75 550 60 500 50 440 60 400 52 340 62 300 95 240 176 234 182 188 205 184 225 160 248 152 262 110z" fill="#ead7d5" stroke-width="3.500"/>
<g>
<path d="M95 242l85-12 28 4-12 30-24 32-14 10-4 24 0 20 6 55-8 34-92 2-10-50 5-45 10-50z" fill="#6a78c8"/>
<path d="M40 320l14-4 4 60-4 20-8-20z" fill="#3a3560"/>
<path d="M120 274l16 14-6 20z" fill="#ead7d5"/>
<path d="M222 160l24-4v78h-36l-8-10 5-35z" fill="#3d93d6"/>
<path d="M176 228l30-4 2 12-34 2z" fill="#3d93d6"/>
<path d="M250 206l20 10-2 10-18-6z" fill="#a08a50"/>
<path d="M413 62l40-20 8 40-6 45-30-4-8-30z" fill="#8a7a30"/>
<path d="M453 62l20-20 130-4 32 2-3 24-52-4-30 28-35 4-20 6-40-4z" fill="#8cc22a"/>
<path d="M534 98l20-6 2 12-18 6z" fill="#a9cf20"/>
<path d="M415 405l28-6 8 10v33h-38zM284 300l20-8 22 20-12 12-30-2zM413 322l12-6 8-18 10 6 10 24-22 18-18-8zM364 360l20-6 28 18-4 24-36-12zM320 380l22-8 20 12-10 14-30-2zM282 402l24 8-10 14zM250 368l30 6-4 22-22-6zM244 310l8 10 4 36-8-6zM246 430l18 8-8 6z" fill="#4fbb2f"/>
<path d="M455 310l50-10 45 22 2 120h-97zM552 322l32-14 35 12 40 30 0 92-105 4z" fill="#c42ad0"/>
<path d="M505 302l18 26 2 34-34-4zM660 390v52l-54-18z" fill="#c843e6"/>
<path d="M608 312q30 6 50 30v38l-40-30z" fill="#a83ab8"/>
<path d="M455 446h44v64h-44zM500 486l40 2v22l-40-2zM458 512l38 6-2 24-24 4-14-20zM500 446h48v40h-48zM545 545h62v48l-28-20z" fill="#c81bc8"/>
<path d="M618 446h42v20l-5 32-20-12-16-20zM615 510l18 4-2 16-14-2z" fill="#c81bc8"/>
<path d="M147 508l40 5 56 10v40l-44 12-55-22z" fill="#35d68c"/><path d="M190 446h54l-5 20-30 2zM152 455l30 15 20 22 40-2v20l-40-4-22-20z" fill="#35d68c"/>
<path d="M192 414l50 7v22h-50z" fill="#6a76c8"/><path d="M146 398l14 2 4 16-18 2zM200 334l14-4 2 14-14 2zM230 304l8 4v14l-8-4z" fill="#6a76c8"/>
<path d="M247 525l70 8 24 20-35 7h-59zM405 450l48-6 2 60-14 40-45-5-20-20-30 5 30-28 26-8z" fill="#d27b70"/>
<path d="M250 446l20 10 30 12v8l-24 10-24 40-6-30zM247 562h18v12l-18 4z" fill="#a85e5c"/>
<path d="M684 306l12-20 26-8 6 34 22 26 10-20 20-12 4-8 10 6-10 12 2 26 10 30 24-16 16 14-8 28-26 10-8 20h-110l-24-60z" fill="#c8783a"/>
<path d="M664 340l30 10 18 30 4 62h-52zM724 428l56-4 14 6-2 12h-70z" fill="#cc7a40"/>
<path d="M663 446h40l-4 25-12 26-18-22zM725 446l54-2-26 54-38-16zM700 496l34 18-30 48-14-12z" fill="#66cb6b"/>
<path d="M786 70l82-18v168l-46 16-16-60z" fill="#35bd9e"/>
<path d="M870 50l34-4 16 36 26 148-40-12-36 12z" fill="#2a2be0"/>
<path d="M965 68L1020 66 1077 84 1077 224 1022 220 1024 200 982 136 998 106z" fill="#2a2be0"/>
<path d="M935 56l85 6 10 12-60-4zM1020 60l57 24v14l-50-22z" fill="#2a2be0"/>
<path d="M1077 96l34 10 40-6 6-10-28 34-52-8zM1110 122l28-2 12 18-10 20 16 44-40 4-24-12-14 20v-72z" fill="#7bcbd2"/>
<path d="M1120 70l14-8 14 10-6 10h-20z" fill="#6fc2cc"/>
<path d="M688 100l66-8-2 16-62 10zM728 66l26-4 2 12-22 4z" fill="#35bd9e"/>
<path d="M868 240c-30 0-48 14-46 34 8 30 30 26 48 14zM868 320l-34 40 10 6 24-14z" fill="#cc7a40"/><path d="M824 256q20 14 44 2" fill="none"/>
<path d="M870 240l54 0-4 24-16 12-8 36h-26zM928 262l24-20 10 4 12 26 2 14-40-8zM912 284l26 2 2 24h-26zM870 316l58 0v22l-58 8zM870 352l58-6 4 30-62 2z" fill="#9212dc"/>
<path d="M936 478l20-6 17 20-17 26-20-14zM938 560l14-18 20 8-2 20-16 8zM942 600l8-2 8 20-8 4zM1048 466l18-2-2 18z" fill="#84bd55"/>
<path d="M655 666l8-8 22 6-4 20-24-4zM790 668l32-6 18 10-18 12h-30z" fill="#cc3f62"/>
<path d="M884 714l10-20 36 8v60h-18v-20h-20l12-24z" fill="#9b6ad2"/>
<path d="M1104 685h32v12l-30-2zM814 620h22v12l-14 12z" fill="#4fbb6e"/>
<path d="M1162 426l26-2 14 4-12 4-28 6zM1230 234h12v12h-12z" fill="#a8408c"/>
<path d="M248 795l14-20 16 8 3 24-20 12z" fill="#5c3ed8"/>
<path d="M332 790l14-2 18 40-8 12-18-10zM425 800l28-4v32l-24-6zM370 814l36-4v20l-16 20z" fill="#5648c8"/>
<path d="M288 842l36-6 54 22 2 30-10 38-30-12-36-24-22-24z" fill="#b8a42a"/>
<path d="M200 794l16 2 18 32-2 26-10-4zM174 656l18 2 6 20-20 4zM202 652l20-2-2 10-18 2zM208 700l14 30-8-4z" fill="#d9575a"/>
<path d="M205 876l26-4 2 50-24 8zM205 990l36-14v58l-30 4zM196 966l10 40-10 8z" fill="#c81f86"/>
<path d="M245 966l16 12-4 26-12 10zM248 1014l34-2 8 24 34 20-56-10-22-6zM272 1008l12-16 8 14 26 12-4 8-22-2z" fill="#c6ac2e"/>
<path d="M260 952l18-6 10 10-16 10z" fill="#c6ac2e"/>
<path d="M506 594l14-8 4 8-12 8zM520 620l10 2v8l-10-4z" fill="#c81bc8"/>
<path d="M162 612l16-2-4 14-12 4zM92 530h8v8h-8z" fill="#35d68c"/>
</g>
<g fill="url(#dense)" stroke="none">
<path d="M60 380l4-60 46 10 34 20 14 30 0 62h-98z"/><path transform="translate(9 8)" d="M60 350h70v84H55z"/>
<path d="M413 62l40-20 8 40-6 45-30-4-8-30zM453 62l20-20 70-2 8 42-50 16-40-4zM590 38h42v26l-42-2z"/>
<path d="M555 320l30-14 35 12v100l-65 24z"/>
<path d="M684 306l12-20 26-8 6 34 22 26 10-20 20-12 16 20 2 26 10 30 8 30-18 20h-110l-24-60z"/>
<path d="M820 110l30 0 6 60-34 10z"/><path d="M900 140l30 0 12 80-34-10z"/><path d="M1040 170h36v54h-36z"/>
<path d="M288 842l36-6 54 22 2 30-10 38-30-12-36-24-22-24zM332 790l14-2 18 40-8 12-18-10zM370 814l36-4v20l-16 20zM425 800l28-4v32l-24-6zM1080 190h32v42h-32zM246 446l30 10 20 12-20 20-30 30z"/>
<path d="M205 876l26-4 2 50-24 8z"/>
</g>
<g fill="url(#parcel)" stroke="none">
<path d="M95 242l85-12 28 4-12 30-24 32-14 10-4 24 0 20 6 55-8 34-92 2-10-50 5-45 10-50z"/>
<path d="M455 310l50-10 45 22 2 120h-97zM555 320l105 50v30l-54 42h-52zM500 446h48v40h-48zM222 160l24-4v78h-36l-8-10 5-35zM786 70l82-18v168l-46 16-16-60zM870 50l34-4 16 36 26 148-40-12-36 12zM965 68L1020 66 1077 84 1077 224 1022 220 1024 200 982 136 998 106zM870 240l54 0-4 24-16 12-8 36h-26zM664 340l30 10 18 30 4 62h-52zM1080 122h58l12 36 6 44-80 10zM370 505l84-5v46h-60zM152 455l50 30 42 6v20h-60zM246 366l34 8 30 46-50-20zM364 360l40 0 4 36-88-6zM545 545h60v48zM413 322l12-26 30 40-22 8z"/>
</g>
<path transform="translate(20 17)" fill="url(#parcel)" stroke="none" d="M435 300l100 5v118h-98zM766 60l66-10v160l-30 10zM850 50l34-4 30 180-64-12zM960 68l80 10v130l-50-30z"/>
<path d="M546 486h20v56h-20zM475 42h30l20 50-40 6zM416 105l40 6-6 16-30-4zM556 312h28l30 20 2 40-30 30-30-10zM336 238l38-4-4 26-16 12zM620 318l30 10 8 30-20-10zM612 546h70v12h-70zM930 566l30 4-8 18zM1000 60h12v8h-12zM250 456l20 2 6 24-14 8z" fill="#2f2033"/>
<path d="M566 488l6-26 20-14 26 6 4 24 14 10 20 0 8-20 26 74-70 4-56-2z" fill="#ead7d5"/>
<path d="M616 496l16-8 6 12-12 6zM638 484l14 6 2 12-10 4zM612 512l20 0 4 14-18 4z" fill="#c81bc8"/>
<path d="M700 340q26 50 14 102M740 340q20 30 14 60M876 355q30-16 64-12M910 300l8-36 24-12" fill="none" stroke="#ead7d5" stroke-width="6"/>
<path d="M660 340q60 30 52 100l-18 60" fill="none" stroke-width="3"/><circle cx="716" cy="514" r="10" fill="#66cb6b"/>
<g fill="none" stroke-linecap="round" stroke-width="9">
<path d="M290 170h2m18 3h4m-8 5h14m26 20h-8m6 8h2m40-36l6-3m18 34v.1m-14 14v.1m-16 2v.1M264 163h-12m0 24v.1m22 0v.1m-20 12v.1M270 216l-10-4m44 18l-8-10m16 20l-10 10-10 6m-20-20v.1m-14 6v.1m6 16v.1M208 246v.1m14 4v.1m-28 4v.1m-12 10v.1m26 6v.1m22-8v.1m10 20v.1m-30 6v.1m-20 8v.1m26 4v.1m-32 14v.1m16 8v.1M256 290v.1m22-14v.1m-8 24v.1m28-26v.1m14 18v.1m-20 10v.1m38-4v.1m24-10v.1m-24 28h8m-40 14v.1m18 2v.1m-30-10v.1m10 14v.1m-36-18v.1m0 24v.1m20 6v.1m26 8v.1m20-14v.1m14-8v.1m14 12v.1m20-8v.1m12 2v.1M180 330v.1m14-8v.1m-16 26v.1m24-12v.1m-30 30v.1m24 0v.1m18-6v.1m-10 16v.1m22 4v.1m-40 6v.1m14 12v.1m-24-16v.1m44 20v.1m-6-50v.1m16-20v.1M142 406l12 0m82-96v40m8-30v30M320 350v.1m-30-4v.1m-12-8v.1"/>
<path d="M522 292h10m28 0h12M432 294h4M348 440v.1M98 528v4m-36-70h10m16-4h10m-2 14v12m10-2v.1M106 550v.1m16 28v.1m10 4l6 4m4-6v.1M300 495v.1m40 28v.1M126 510v.1M535 563v.1M170 680v20m18 60v10m14-28v.1m16 4v.1m10 12h12m-24-42l-6-20m20 40v.1M192 796l26 2 14 20m4 28v20m18-8v.1m10-10v.1m20-6v10m20-8v8m50-66h40m-10-16v.1m8 36v.1M206 952h14M372 1038v.1m24-8v2M262 958l20 0m-40 20v30m20-16l10-10M200 970v40m12 20v16m20-60l-8-16M216 936v.1m-4-56l18-6M975 168h.1m8-2v.1M1156 234v4m62 6h14m-14-2v.1m24-6v6M1292 309h4M1004 384h12M994 284h18v4h-18zM968 458v4m-76 42h8M915 564h6m110 26l4 4"/>
<path d="M1022 717h6M1162 716v.1M768 368h.1M822 632l6 10M1408 928v.1M478 742h4M700 650v.1" stroke-width="6"/>
</g>
<path d="M37 28H1493V1276H37zM245 28V1276M453 28V1276M661 28V1276M869 28V1276M1077 28V1276M1285 28V1276M37 236H1493M37 444H1493M37 652H1493M37 860H1493M37 1068H1493" fill="none" stroke="#232323" stroke-width="4.500" stroke-linejoin="miter"/>
</g>
</svg>
</div>
<i class="hgrip"></i>
<div class="dockhead attr"><h2>Intersection — Features Total: 3448, Filtered: 3448, Selected: 0</h2><svg><use href="#float"/></svg><svg><use href="#close"/></svg></div>
<div class="minibar"><b><svg><use href="#pencil"/></svg></b><b class="off"><svg><use href="#multi"/></svg></b><b class="off"><svg><use href="#saveedit"/></svg></b><b><svg><use href="#refresh"/></svg></b><i class="sep"></i><b class="off"><svg><use href="#pencils"/></svg></b><b class="off"><svg><use href="#trash"/></svg></b><b class="off"><svg><use href="#cut"/></svg></b><b class="off"><svg><use href="#copy"/></svg></b><b class="off"><svg><use href="#paste"/></svg></b><i class="sep"></i><b><svg><use href="#esel"/></svg></b><b><svg><use href="#selall"/></svg></b><b><svg><use href="#invert"/></svg></b><b><svg><use href="#unsel"/></svg></b><b><svg><use href="#funnel"/></svg></b><b><svg><use href="#totop"/></svg></b><b><svg><use href="#pansel"/></svg></b><b><svg><use href="#zsel"/></svg></b><i class="sep"></i><b class="off mono"><svg><use href="#fields"/></svg></b><b class="off mono"><svg><use href="#fields"/></svg></b><b><svg><use href="#calc"/></svg></b><b><svg><use href="#abacus"/></svg></b><i class="sep"></i><b><svg><use href="#cond"/></svg></b><i class="sep"></i><b class="pressed"><svg><use href="#dock"/></svg></b><b><svg><use href="#act2"/></svg></b></div>
<div class="grid">
<div class="scroller">
<table>
<thead><tr><th></th><th>osm_id</th><th>code</th><th>fclass</th><th>name</th><th>grid_id</th></tr></thead>
<tbody>
<tr><th>1</th><td class="id focus">680852598</td><td class="n">7203</td><td>residential</td><td class="ar">كمبوند جراند قيصر</td><td class="n">15</td></tr>
<tr><th>2</th><td class="id">680724927</td><td class="n">7203</td><td>residential</td><td class="ar">كمبوند ريفيرا هيلز</td><td class="n">15</td></tr>
<tr><th>3</th><td class="id">680724928</td><td class="n">7203</td><td>residential</td><td class="ar"><bdi dir="rtl">كمبوند أصالة سي</bdi>...</td><td class="n">15</td></tr>
<tr><th>4</th><td class="id">680724929</td><td class="n">7203</td><td>residential</td><td class="ar">كمبوند ميدتاون</td><td class="n">15</td></tr>
<tr><th>5</th><td class="id">680724930</td><td class="n">7203</td><td>residential</td><td class="ar two"><div>كمبوند مارفيل<br><bdi dir="rtl">س</bdi>...</div></td><td class="n">15</td></tr>
<tr><th></th><td></td><td></td><td></td><td></td><td></td></tr>
</tbody></table>
</div>
<div class="sbar"><i class="up"></i><i class="thumb t-attr"></i><i class="down"></i></div>
</div>
<div class="attrfoot"><button class="showall"><svg><use href="#funnel"/></svg>Show All Features<i class="arr"></i></button><span class="push"></span><svg class="formi"><use href="#form"/></svg><button class="tablebtn"><svg><use href="#table"/></svg></button></div>
</section>

<section class="styling">
<div class="dockhead"><h2>Layer Styling</h2><svg><use href="#float"/></svg><svg><use href="#close"/></svg></div>
<div class="combo layer"><svg class="pl"><use href="#poly"/></svg><span>Intersection</span><i class="arr"></i></div>
<div class="panel">
<div class="side"><b class="act"><svg><use href="#greybrush"/></svg></b><b><svg><use href="#tag"/></svg></b><b><svg class="mask"><use href="#halo"/></svg></b><b><svg><use href="#cube"/></svg></b><b><svg><use href="#tree"/></svg></b><b><svg><use href="#hist"/></svg></b></div>
<div class="body">
<div class="combo cat"><svg viewBox="0 0 22 24"><path d="M2 2h15v5H2z" fill="#18a5c0" stroke="#1258d0" stroke-width="1.500"/><path d="M4.500 9.500h15v5h-15z" fill="#12b050" stroke="#0a6a3a" stroke-width="1.500"/><path d="M2 17.500h15v4.500H2z" fill="#b80d0d" stroke="#7a0606" stroke-width="1.500"/></svg><span>Categorized</span><i class="arr"></i></div>
<div class="row"><label>Value</label><div class="combo val"><strong>123</strong><span>grid_id</span><i class="arr"></i></div><button class="epsb"><svg><use href="#eps"/></svg></button></div>
<div class="row sy"><label>Symbol</label><button class="symbtn"><i></i></button><button class="drop"><i class="arr"></i></button></div>
<div class="row cr"><label>Color ramp</label><button class="rampbtn">Random colors</button><button class="drop"><i class="arr"></i></button></div>
<div class="classes">
<div class="clist"><div class="chead"><span>Symbol<i class="arr"></i></span><span>Value</span><span>Legend</span></div>
<ul>
<li><i class="cb"><svg><use href="#check"/></svg></i><i class="cs" style="background:#cf48ee"></i><span>14</span><span>14</span></li>
<li><i class="cb"><svg><use href="#check"/></svg></i><i class="cs" style="background:#d01ed0"></i><span>15</span><span>15</span></li>
<li><i class="cb"><svg><use href="#check"/></svg></i><i class="cs" style="background:#39bfcd"></i><span>16</span><span>16</span></li>
<li><i class="cb"><svg><use href="#check"/></svg></i><i class="cs" style="background:#2bd49f"></i><span>19</span><span>19</span></li>
<li><i class="cb"><svg><use href="#check"/></svg></i><i class="cs" style="background:#cf8639"></i><span>20</span><span>20</span></li>
<li><i class="cb"><svg><use href="#check"/></svg></i><i class="cs" style="background:#66e66c"></i><span>21</span><span>21</span></li>
<li><i class="cb"><svg><use href="#check"/></svg></i><i class="cs" style="background:#cf4b58"></i><span>22</span><span>22</span></li>
<li><i class="cb"><svg><use href="#check"/></svg></i><i class="cs" style="background:#1d2bee"></i><span>25</span><span>25</span></li>
<li><i class="cb"><svg><use href="#check"/></svg></i><i class="cs" style="background:#9114e8"></i><span>26</span><span>26</span></li>
<li><i class="cb"><svg><use href="#check"/></svg></i><i class="cs" style="background:#84d64d"></i><span>27</span><span>27</span></li>
<li><i class="cb"><svg><use href="#check"/></svg></i><i class="cs" style="background:#9b7bd8"></i><span>28</span><span>28</span></li>
<li><i class="cb"><svg><use href="#check"/></svg></i><i class="cs" style="background:#82e3d5"></i><span>31</span><span>31</span></li>
<li><i class="cb"><svg><use href="#check"/></svg></i><i class="cs" style="background:#cf60b4"></i><span>32</span><span>32</span></li>
<li><i class="cb"><svg><use href="#check"/></svg></i><i class="cs" style="background:#4bdb70"></i><span>34</span><span>34</span></li>
<li><i class="cb"><svg><use href="#check"/></svg></i><i class="cs" style="background:#bfdc2a"></i><span>38</span><span>38</span></li>
<li><i class="cb"><svg><use href="#check"/></svg></i><i class="cs" style="background:#de6690"></i><span>41</span><span>41</span></li>
</ul></div>
<div class="sbar"><i class="up"></i><i class="gap"></i><i class="thumb t-cls"></i><i class="down"></i></div>
</div>
<div class="btns"><button class="w80">Classify</button><button class="sq"><svg viewBox="0 0 24 24"><path d="M9 2h6v7h7v6h-7v7H9v-7H2V9h7z" fill="#fff" stroke="#4b8a58" stroke-width="1.600"/><path d="M12 4.500v15M4.500 12h15" stroke="#5c9a68" stroke-width="3"/></svg></button><button class="sq"><svg viewBox="0 0 24 24"><path d="M1.500 7.500h21v9h-21z" fill="#fff" stroke="#ee5a5a" stroke-width="1.600"/><path d="M4 12h16" stroke="#ee4444" stroke-width="3.500"/></svg></button><button class="w80">Delete All</button><span class="push"></span><button class="adv">Advanced<i class="arr"></i></button></div>
<div class="rend"><i class="tri"></i>Layer Rendering</div>
<div class="foot"><button class="ur"><svg><use href="#undo"/></svg></button><button class="ur"><svg><use href="#redo"/></svg></button><span class="push"></span><i class="cb"><svg><use href="#check"/></svg></i><span class="live">Live update</span><button class="w80 apply">Apply</button></div>
</div>
</div>
<div class="tabs"><span>Topology Check...</span><span>Processing ...</span><span class="sel">Layer...</span><span>Results...</span></div>
</section>
</main>

<footer class="status">
<div class="locate"><svg viewBox="0 0 14 14"><circle cx="5.500" cy="5.500" r="4.300" fill="none" stroke="#888" stroke-width="1.200"/><path d="M8.500 8.500l4.500 4.500" stroke="#888" stroke-width="1.600"/></svg>Type to locate (Ctrl+K)</div>
<span class="msg">0 feature(s) selected on layer Intersection.</span>
<span class="lab coord">Coordinate</span><div class="field f-coord">657403,796422</div>
<svg class="mouse" viewBox="0 0 24 24"><path d="M1 6Q3-1 10 2l8 11-8 6z" fill="#111"/><path d="M5 7l2-3 2 4-1 3zM10 4l3 5" stroke="#fff" stroke-width="1.800" fill="none"/><path d="M5 14q8-5 14-3 5 5 2 9-6 5-11 2z" fill="#222"/><circle cx="15" cy="19" r="3.500" fill="#fff" stroke="#111" stroke-width="1.500"/><path d="M14 5l8-3M16 8l6-3M0 16h3" stroke="#111" stroke-dasharray="2 1.500" stroke-width="1.500"/></svg>
<span class="lab scale">Scale</span><div class="field f-scale">1:817312<i class="arr"></i></div>
<svg class="lock" viewBox="0 0 20 24"><path d="M4 12V8a6 6 0 0 1 12 0v4" fill="none" stroke="#8a8a80" stroke-width="2.600"/><rect x="1" y="11" width="18" height="12" rx="1.500" fill="#5d5d5d"/></svg>
<span class="lab mag">Magnifier</span><div class="field f-mag">100%<i class="spin"></i></div>
<span class="lab rot">Rotation</span><div class="field f-rot">0.0 °<i class="spin"></i></div>
<i class="cb"><svg><use href="#check"/></svg></i><span class="lab render">Render</span>
<svg class="globe" viewBox="0 0 24 22"><path d="M1 10L5 3q7-4 14 0l4 7-4 7-7 4-7-4z" fill="#666"/><path d="M1 10h22M5 4q7 3 14 0M5 16q7-3 14 0M12 1v20M8 2q-5 9 0 17M16 2q5 9 0 17" stroke="#ddd" fill="none"/></svg>
<span class="lab epsg">EPSG:22992</span>
<svg class="bubble" viewBox="0 0 24 22"><path d="M12 1C5 1 0 4 0 9s5 8 12 8l7 4-1-5c4-1 6-4 6-7 0-5-5-8-12-8z" fill="#5a5a5a"/><path d="M5.500 8h3v3h-3zM10.500 8h3v3h-3zM15.500 8h3v3h-3z" fill="#fff"/></svg>
</footer>
</div>
</body>
</html>
```
FILE: styles.css
```css
* { box-sizing: border-box; }
body { margin: 0; width: 1920px; height: 1036px; overflow: hidden; background: #efefef; color: #000; font: 17px/22px "Open Sans", "Noto Sans", "DejaVu Sans", sans-serif; }
.paints { position: absolute; width: 0; height: 0; }
.icons { display: none; }
h1, h2, ul { margin: 0; padding: 0; font-weight: 400; list-style: none; }
i, em { font-style: normal; }
button { font: inherit; color: #111; padding: 0; border: 1px solid #adadad; border-radius: 3px; background: linear-gradient(#fefefe, #eee); display: flex; align-items: center; justify-content: center; }
.app { display: flex; flex-direction: column; height: 1036px; border-bottom: 2px solid #45454b; }
.push { flex: 1; }

.titlebar { height: 34px; background: #fff; display: flex; align-items: center; flex: none; }
.logo { width: 24px; height: 26px; margin-left: 2px; }
.titlebar h1 { font-size: 17.200px; margin-left: 5px; padding-top: 2px; flex: 1; letter-spacing: .1px; }
.winctl { width: 156px; height: 16px; margin-right: 28px; }
.menu { height: 30px; flex: none; display: flex; align-items: center; gap: 18.100px; padding: 2px 0 0 13px; border-bottom: 1px solid #d5d5d5; font-size: 16.500px; letter-spacing: -.02px; }
.menu u { text-underline-offset: 3px; text-decoration-thickness: 1px; }

.bar { height: 43px; flex: none; display: flex; align-items: center; border-bottom: 1px solid #b4b4b4; background: linear-gradient(#fafafa, #eee); }
.bar b { width: 33px; height: 31px; display: flex; align-items: center; justify-content: center; border: 1px solid transparent; border-radius: 3px; }
.bar svg { width: 24px; height: 24px; }
.bar .small svg { width: 18px; height: 18px; }
.bar .raised { background: #fff; border-color: #aaa; }
.pressed { background: #dcdcdc; border: 1px solid #aaa !important; border-radius: 3px; }
.off svg { opacity: .38; }
.mono svg { filter: grayscale(.8); }
.grip { width: 24px; height: 18px; position: relative; display: block; }
.grip::before { content: ""; display: block; width: 5px; height: 19px; margin: 0 auto; background: conic-gradient(from 270deg at 1px 1px, #bbb 90deg, transparent 0) 0 0 / 4px 3px; }
.grip.first { width: 18.5px; }
.grip.first::before { margin-left: 9px; }
.sep { width: 10px; height: 20px; background: linear-gradient(90deg, transparent 4px, #cfcfcf 4px, #cfcfcf 5px, #fff 5px, #fff 6px, transparent 6px); flex: none; }
.arr { width: 17.500px; height: 31px; display: flex; align-items: center; justify-content: center; }
.arr::before { content: ""; border: 5.500px solid transparent; border-top: 6px solid #555; border-bottom: 0; }
.off2 { opacity: .5; }
.bar.third { height: 42px; margin-bottom: 1px; }

.work { flex: 1; display: grid; grid-template-columns: 432px 968px 502px; column-gap: 9px; min-height: 0; }
.dockhead { display: flex; align-items: center; height: 27px; }
.dockhead h2 { flex: 1; font-size: 16px; padding-left: 4px; }
.dockhead svg { width: 12px; height: 12px; margin-left: 3px; margin-top: -2px; }
.minibar { display: flex; align-items: center; height: 25px; }
.minibar b { width: 25px; height: 24px; display: flex; align-items: center; justify-content: center; border: 1px solid transparent; }
.minibar svg { width: 16px; height: 16px; }

.layers { display: flex; flex-direction: column; }
.layers .dockhead { height: 25px; padding-right: 2px; flex: none; }
.tree-tools { height: 31px; padding: 0 0 6px 5.500px; flex: none; }
.tree-tools .arr { width: 17px; }
.tree { flex: 1; background: #fff; border: 1px solid #b8b8b8; font-size: 16.400px; }
.tree li { height: 27px; display: flex; align-items: center; padding-right: 9px; }
.tree li:not(.kid) { padding-right: 10px; }
.tw { width: 33px; display: flex; padding-left: 11px; }
.closed::before { content: ""; border: 6px solid transparent; border-left: 6px solid #555; border-right: 0; margin-left: 1px; }
.opened::before { content: ""; border: 6px solid transparent; border-top: 6px solid #555; border-bottom: 0; margin-left: -1px; }
.kid { padding-left: 63px; }
.cb { width: 21px; height: 21px; flex: none; background: linear-gradient(#f4f4f4, #fff 5px); border: 1px solid #b5b5b5; display: block; }
.cb svg { display: block; width: 19px; height: 19px; }
.sw { width: 22px; height: 22px; border: 1px solid #3a3a3a; margin: 0 6px; }
.ln { width: 22px; height: 2px; margin: 0 6px 4px; }
.dot { width: 12px; height: 12px; border-radius: 50%; border: 1px solid #333; margin: 0 12px 4px 12px; }
.dot.tiny { width: 6px; height: 6px; margin: 0 15px 4px 15px; }
.osmico { width: 20px; height: 20px; margin: 0 7px 0 9px; }
.pl { width: 24px; height: 24px; margin: 0 6px; fill: url(#pale); stroke: #888; stroke-width: 1.200; flex: none; }
.pl.blue { fill: #9cc3e6; stroke: #6c93b8; }
.on { font-weight: 700; }
.wide { letter-spacing: .25px; }
.hid { font-weight: 700; font-style: italic; color: #808080; font-size: 16.800px; letter-spacing: .55px; }
.cur { background: #efefef; }
.tree em { margin-left: auto; width: 24px; height: 24px; border: 1px solid #e2e2e2; border-radius: 3px; background: #f5f5f5; display: flex; align-items: center; justify-content: center; color: #777; }
.tree em svg { width: 19px; height: 19px; }
.tree em.bl { color: #6b88a6; }
.ar { font-family: "DejaVu Sans", sans-serif; }
.tree .ar { font-size: 15px; }

.center { display: flex; flex-direction: column; }
.canvas { height: 439px; border: 1px solid #b8b8b8; background: #fff; flex: none; }
.canvas svg { display: block; }
.hgrip { height: 7px; flex: none; width: 17px; margin-left: 477px; background: conic-gradient(from 270deg at 1px 1px, #bbb 90deg, transparent 0) 0 4px / 3px 6px repeat-x; }
.dockhead.attr { height: 27px; flex: none; padding-right: 1px; }
.attr h2 { padding-left: 9px; font-size: 16.500px; letter-spacing: .15px; }
.center .minibar { padding: 0 0 6px 5px; height: 31px; flex: none; }
.grid { height: 264px; flex: none; display: flex; border: 1px solid #b8b8b8; background: #fff; }
.scroller { flex: 1; overflow: hidden; background: linear-gradient(#efefef 31px, #fff 31px); }
table { border-collapse: separate; border-spacing: 0; table-layout: fixed; width: 797px; font-size: 16.500px; }
thead th { height: 31px; padding: 4px 0 0; width: 150px; font-weight: 400; background: linear-gradient(#fefefe, #ededed); border-bottom: 1px solid #ababab; border-right: 1px solid #cbcbcb; }
thead th:first-child { width: 47px; border-right: 0; }
thead th:last-child { border-right: 0; }
tbody th { font-weight: 400; text-align: left; padding: 3px 0 0 3px; background: linear-gradient(#fdfdfd, #ededed); border-right: 1px solid #ababab; border-bottom: 1px solid #b4b4b4; }
tbody td { height: 45px; padding: 3px 3px 0; border-right: 1px solid #c6c6c6; border-bottom: 1px solid #c6c6c6; white-space: nowrap; overflow: hidden; }
tbody tr:nth-child(even) td { background: #e8e6e2; }
td.n { text-align: right; letter-spacing: .45px; }
td.id { letter-spacing: .6px; }
td.ar { font-size: 17.200px; padding: 2px 4px 0; }
td.two { vertical-align: top; padding-top: 0; }
td.two div { height: 44px; overflow: hidden; line-height: 27px; margin-top: -1px; }
td.focus { background: linear-gradient(#fbfdff, #e6f2fc); outline: 2px solid #0f8; outline-offset: -2px; }
.sbar { width: 22px; background: #e6e6e6; border-left: 1px solid #b8b8b8; display: flex; flex-direction: column; flex: none; }
.sbar i { display: flex; align-items: center; justify-content: center; background: linear-gradient(90deg, #fefefe, #f1f1f1); flex: none; }
.up { height: 21px; border-bottom: 1px solid #b8b8b8; }
.up::before { content: ""; border: 5.500px solid transparent; border-bottom: 6px solid #555; border-top: 0; }
.down { height: 21px; border-top: 1px solid #b8b8b8; margin-top: auto; }
.down::before { content: ""; border: 5.500px solid transparent; border-top: 6px solid #555; border-bottom: 0; }
.thumb { border-bottom: 1px solid #b8b8b8; }
.t-attr { height: 40px; }
.sbar .gap { height: 147px; background: #e6e6e6; border-bottom: 1px solid #b8b8b8; }
.t-cls { height: 200px; }
.attrfoot { display: flex; align-items: center; height: 36px; padding: 0 3px; }
.showall { width: 173px; height: 31px; font-size: 16px; position: relative; white-space: nowrap; justify-content: flex-start; padding-left: 6px; letter-spacing: -.3px; }
.showall svg { width: 22px; height: 24px; margin-right: 4px; }
.showall .arr { position: absolute; right: 0; bottom: -8px; width: 14px; }
.formi { width: 21px; height: 21px; margin-right: 5px; }
.tablebtn { width: 32px; height: 31px; background: #dcdcdc; }
.tablebtn svg { width: 22px; height: 22px; }

.styling { display: flex; flex-direction: column; padding-left: 3px; }
.styling .dockhead { height: 24px; padding-right: 2px; flex: none; }
.styling .dockhead h2 { padding-left: 1px; }
.combo { border: 1px solid #adadad; border-radius: 3px; background: linear-gradient(#fefefe, #ececec); display: flex; align-items: center; font-size: 16px; }
.combo span { flex: 1; padding-top: 1px; }
.combo .arr { margin-right: 8px; }
.combo.layer { height: 32px; margin-right: 3px; flex: none; }
.combo.layer .pl { margin: 0 3px 0 5px; }
.panel { display: flex; height: 709px; flex: none; }
.side { width: 38px; background: linear-gradient(#efefef 41px, #5c5c5c 41px); display: flex; flex-direction: column; }
.side b { height: 32.200px; display: flex; align-items: center; justify-content: center; padding-right: 8px; }
.side svg { width: 22px; height: 22px; }
.side svg.mask { width: 28px; height: 18px; margin-right: -2px; }
.side .act { height: 41px; padding: 8px 2px 0 0; }
.body { flex: 1; padding: 9px 3px 0 3px; display: flex; flex-direction: column; font-size: 16px; }
.combo.cat { height: 32px; flex: none; }
.cat svg { width: 22px; height: 24px; margin: 0 3px 0 7px; }
.row { display: flex; height: 32px; margin-top: 9px; align-items: center; flex: none; }
.row label { width: 89px; white-space: nowrap; letter-spacing: -.2px; padding-top: 1px; }
.combo.val { width: 325px; height: 32px; background: linear-gradient(90deg, #fff 295px, #f3f3f3 295px); }
.val strong { color: #444; font-size: 13.500px; margin: -4px 3px 0 3px; letter-spacing: .3px; }
.epsb { width: 32px; height: 32px; margin-left: 9px; }
.epsb svg { width: 24px; height: 24px; }
.row.sy { height: 39px; }
.symbtn { flex: 1; height: 39px; }
.symbtn i { width: 338px; height: 33px; background: #9b6d98; border: 1px solid #333; }
.drop { width: 18px; height: 100%; margin-left: 1px; }
.row.cr { height: 28px; }
.rampbtn { flex: 1; height: 28px; }
.classes { height: 417px; margin-top: 9px; border: 1px solid #b8b8b8; background: #fff; display: flex; flex: none; }
.clist { flex: 1; overflow: hidden; }
.chead { display: flex; height: 31px; border-bottom: 1px solid #ababab; background: linear-gradient(#fefefe, #ededed); font-size: 17px; align-items: stretch; }
.chead span { padding: 6px 0 0 3px; border-right: 1px solid #cbcbcb; }
.chead span:nth-child(1) { width: 103px; display: flex; justify-content: space-between; }
.chead span:nth-child(1) .arr { height: 12px; margin-right: 4px; }
.chead span:nth-child(2) { width: 87px; }
.chead span:nth-child(3) { flex: 1; border: 0; }
.clist ul { font-size: 16.500px; }
.clist li { height: 25px; display: flex; align-items: center; padding-left: 3px; }
.clist li span { width: 87px; padding-top: 1px; }
.cs { width: 16px; height: 16px; border: 1px solid #444; margin: 0 60px 2px 6px; }
.btns { display: flex; align-items: center; gap: 9px; height: 32px; margin-top: 9px; flex: none; }
.btns button { height: 30px; white-space: nowrap; }
.btns .sq { width: 39px; height: 32px; }
.sq svg { width: 23px; height: 23px; }
.btns .w80 { width: 80px; letter-spacing: -.3px; }
.adv { width: 98px; letter-spacing: -.2px; }
.adv .arr { width: 15px; margin-left: 3px; }
.rend { display: flex; align-items: center; font-weight: 700; height: 22px; margin-top: 10px; flex: none; letter-spacing: .15px; }
.tri { border: 5px solid transparent; border-left: 7px solid #333; border-right: 0; margin: 0 10px 0 5px; }
.foot { display: flex; align-items: center; height: 31px; margin-top: 12px; flex: none; }
.ur { width: 32px; height: 31px; margin-right: 6px; }
.ur svg { width: 19px; height: 19px; }
.live { margin: 0 12px 0 8px; letter-spacing: -.3px; }
.apply { width: 80px; height: 31px; }
.tabs { display: flex; height: 35px; margin-left: -3px; margin-top: 3px; font-size: 16px; flex: none; }
.tabs span { height: 32px; margin-top: 1px; border: 1px solid #c2c2c2; border-top: 0; background: #dcdcdc; text-align: center; padding-top: 5px; width: 172px; letter-spacing: -.2px; margin-left: -1px; white-space: nowrap; }
.tabs span:first-child { margin-left: 0; }
.tabs span:nth-child(2) { width: 138px; }
.tabs .sel { width: 91px; height: 35px; background: #f7f7f7; margin-top: 0; padding-top: 7px; }
.tabs span:last-child { width: 104px; }

.status { height: 37px; flex: none; display: flex; align-items: center; padding: 2px 0 0 4px; font-size: 16px; white-space: nowrap; letter-spacing: -.2px; }
.locate { width: 291px; height: 27px; border: 1px solid #b0b0b0; border-radius: 3px; background: #fff; color: #808080; display: flex; align-items: center; padding-left: 8px; }
.locate svg { width: 13px; height: 13px; margin-right: 8px; }
.msg { margin-left: 8px; width: 550px; letter-spacing: -.33px; }
.lab { flex: none; letter-spacing: -.4px; }
.coord { width: 80px; }
.field { height: 27px; border: 1px solid #b0b0b0; border-radius: 3px; background: #fff; display: flex; align-items: center; padding-left: 5px; flex: none; }
.f-coord { width: 128px; }
.mouse { width: 24px; height: 24px; margin: 0 13px 0 4px; }
.scale { width: 39px; }
.f-scale { width: 114px; justify-content: space-between; background: linear-gradient(90deg, #fff 83px, #f3f3f3 83px); }
.f-scale .arr { margin-right: 7px; }
.lock { width: 20px; height: 24px; margin: 0 9px 0 12px; }
.mag { width: 68px; letter-spacing: -.55px; }
.f-mag { width: 105px; justify-content: space-between; }
.rot { padding-left: 9px; width: 77px; }
.f-rot { width: 101px; justify-content: space-between; }
.spin { width: 22px; height: 25px; border-left: 1px solid #b8b8b8; background: #f3f3f3; display: flex; flex-direction: column; align-items: center; justify-content: center; gap: 5px; }
.spin::before { content: ""; border: 5.500px solid transparent; border-bottom: 5px solid #555; border-top: 0; }
.spin::after { content: ""; border: 5.500px solid transparent; border-top: 5px solid #555; border-bottom: 0; }
.status .cb { margin: 0 8px 0 6px; }
.render { width: 67px; }
.globe { width: 24px; height: 20px; flex: none; }
.epsg { width: 112px; padding-left: 4px; }
.bubble { width: 25px; height: 22px; flex: none; }
```
